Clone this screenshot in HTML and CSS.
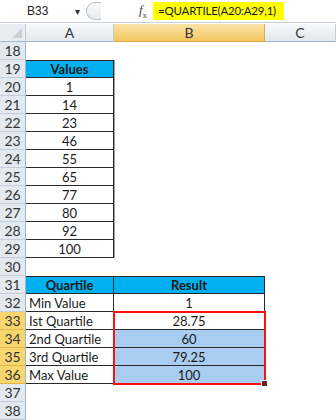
FILE: index.html
```html
<!DOCTYPE html>
<html lang="en">
<head>
    <meta charset="UTF-8">
    <title>Quartile</title>
    <link rel="stylesheet" href="styles.css">
</head>
<body>

    <!-- Barra della formula -->
    <div class="formula-bar">
        <div class="name-box">
            <span class="name">B33</span>
            <span class="arrow">&#9662;</span>
        </div>
        <div class="knob"></div>
        <div class="fx"><i>f</i><sub>x</sub></div>
        <div class="formula"><span class="hl">=QUARTILE(A20:A29,1)</span></div>
    </div>

    <div class="sheet" id="sheet">
        <div class="corner"></div>
        <div class="col-head">A</div>
        <div class="col-head sel">B</div>
        <div class="col-head">C</div>
    </div>

    <script>
        const sheet = document.getElementById('sheet');
        const values = [1, 14, 23, 46, 55, 65, 77, 80, 92, 100];
        const quart = [
            ['Min Value', '1'],
            ['Ist Quartile', '28.75'],
            ['2nd Quartile', '60'],
            ['3rd Quartile', '79.25'],
            ['Max Value', '100']
        ];

        for (let r = 18; r <= 38; r++) {
            const hl = r >= 33 && r <= 36 ? ' sel' : '';
            let a = '<div class="cell"></div>';
            let b = '<div class="cell"></div>';

            if (r === 19) {
                a = '<div class="cell bd head top shade">Values</div>';
            } else if (r >= 20 && r <= 29) {
                a = `<div class="cell bd shade">${values[r - 20]}</div>`;
            } else if (r === 31) {
                a = '<div class="cell bd head top">Quartile</div>';
                b = '<div class="cell bd head top">Result</div>';
            } else if (r >= 32 && r <= 36) {
                const q = quart[r - 32];
                const fill = r >= 34 ? ' pick' : '';
                a = `<div class="cell bd left">${q[0]}</div>`;
                b = `<div class="cell bd${fill}">${q[1]}</div>`;
            }

            sheet.innerHTML += `<div class="row-head${hl}">${r}</div>${a}${b}<div class="cell"></div>`;
        }

        // Bordo rosso della selezione (B33:B36)
        sheet.innerHTML += '<div class="selection"><span class="handle"></span></div>';
    </script>
</body>
</html>
```

FILE: styles.css
```css
body {
    margin: 0;
    font-family: Lato, 'Open Sans', sans-serif;
    font-size: 13px;
    color: #1a1a1a;
    background-color: #fff;
    width: 336px;
    overflow: hidden;
}

/* Barra della formula */
.formula-bar {
    display: flex;
    align-items: center;
    height: 22px;
    border-bottom: 1px solid #c6cdd6;
    margin-bottom: 1px;
}

.name-box {
    width: 84px;
    display: flex;
    align-items: center;
    justify-content: space-between;
    padding: 0 4px 0 27px;
    box-sizing: border-box;
    font-family: 'Liberation Sans', sans-serif;
    font-size: 12px;
    color: #222;
}

.arrow {
    font-size: 10px;
    color: #333;
}

.knob {
    width: 14px;
    height: 16px;
    margin-left: 2px;
    border: 1px solid #b9bec6;
    border-right: none;
    border-radius: 9px 0 0 9px;
    background: linear-gradient(#fafbfc, #e6e9ed);
}

.fx {
    width: 52px;
    text-align: right;
    padding-right: 6px;
    box-sizing: border-box;
    font-family: 'Liberation Serif', serif;
    font-size: 13px;
    color: #444;
}

.fx sub {
    font-size: 9px;
}

.formula {
    flex: 1;
    height: 100%;
    display: flex;
    align-items: center;
}

.hl {
    background-color: #ffff00;
    font-size: 11.5px;
    letter-spacing: -0.2px;
    padding: 2px 8px 2px 5px;
    line-height: 14px;
}

/* Foglio */
.sheet {
    display: grid;
    grid-template-columns: 26px 88px 151px 71px;
    grid-auto-rows: 18px;
    position: relative;
}

.corner {
    background: #e9edf3;
    border-right: 1px solid #c5ccd6;
    border-bottom: 1px solid #9eb6ce;
    position: relative;
}

.corner::after {
    content: '';
    position: absolute;
    right: 3px;
    bottom: 3px;
    border-left: 10px solid transparent;
    border-bottom: 10px solid #c9ced6;
}

.col-head {
    background: linear-gradient(#f6f8fa, #e3e8ee);
    border-right: 1px solid #c5ccd6;
    border-bottom: 1px solid #9eb6ce;
    display: flex;
    align-items: center;
    justify-content: center;
    color: #333;
    font-size: 14px;
}

.col-head.sel {
    background: linear-gradient(#fbe3a8, #f3c65f);
    border-right-color: #e3a94a;
    border-bottom-color: #e3a94a;
}

.row-head {
    background: #e4e9f0;
    border-right: 1px solid #9eb6ce;
    border-bottom: 1px solid #c5ccd6;
    display: flex;
    align-items: center;
    justify-content: center;
    color: #333;
    font-size: 14px;
    box-sizing: border-box;
}

.row-head.sel {
    background: #f8d66f;
    border-bottom-color: #e6b449;
}

.cell {
    display: flex;
    align-items: center;
    justify-content: center;
    box-sizing: border-box;
    white-space: nowrap;
}

.cell.bd {
    border-right: 1px solid #2a2a2a;
    border-bottom: 1px solid #2a2a2a;
}

.cell.top {
    border-top: 1px solid #2a2a2a;
}

.cell.shade {
    box-shadow: 1px 0 0 #a0a0a0;
}

.cell.left {
    justify-content: flex-start;
    padding-left: 3px;
}

.cell.head {
    background-color: #00b0f0;
    font-weight: bold;
}

.cell.pick {
    background-color: #a8cdf0;
}

/* sta sopra alle celle B33:B36 */
.selection {
    position: absolute;
    left: 113px;
    top: 287px;
    width: 153px;
    height: 74px;
    border: 2px solid #ff1010;
    box-sizing: border-box;
    pointer-events: none;
}

.handle {
    position: absolute;
    right: -4px;
    bottom: -4px;
    width: 5px;
    height: 5px;
    background: #6b1f1f;
    border: 1px solid #fff;
}
```
